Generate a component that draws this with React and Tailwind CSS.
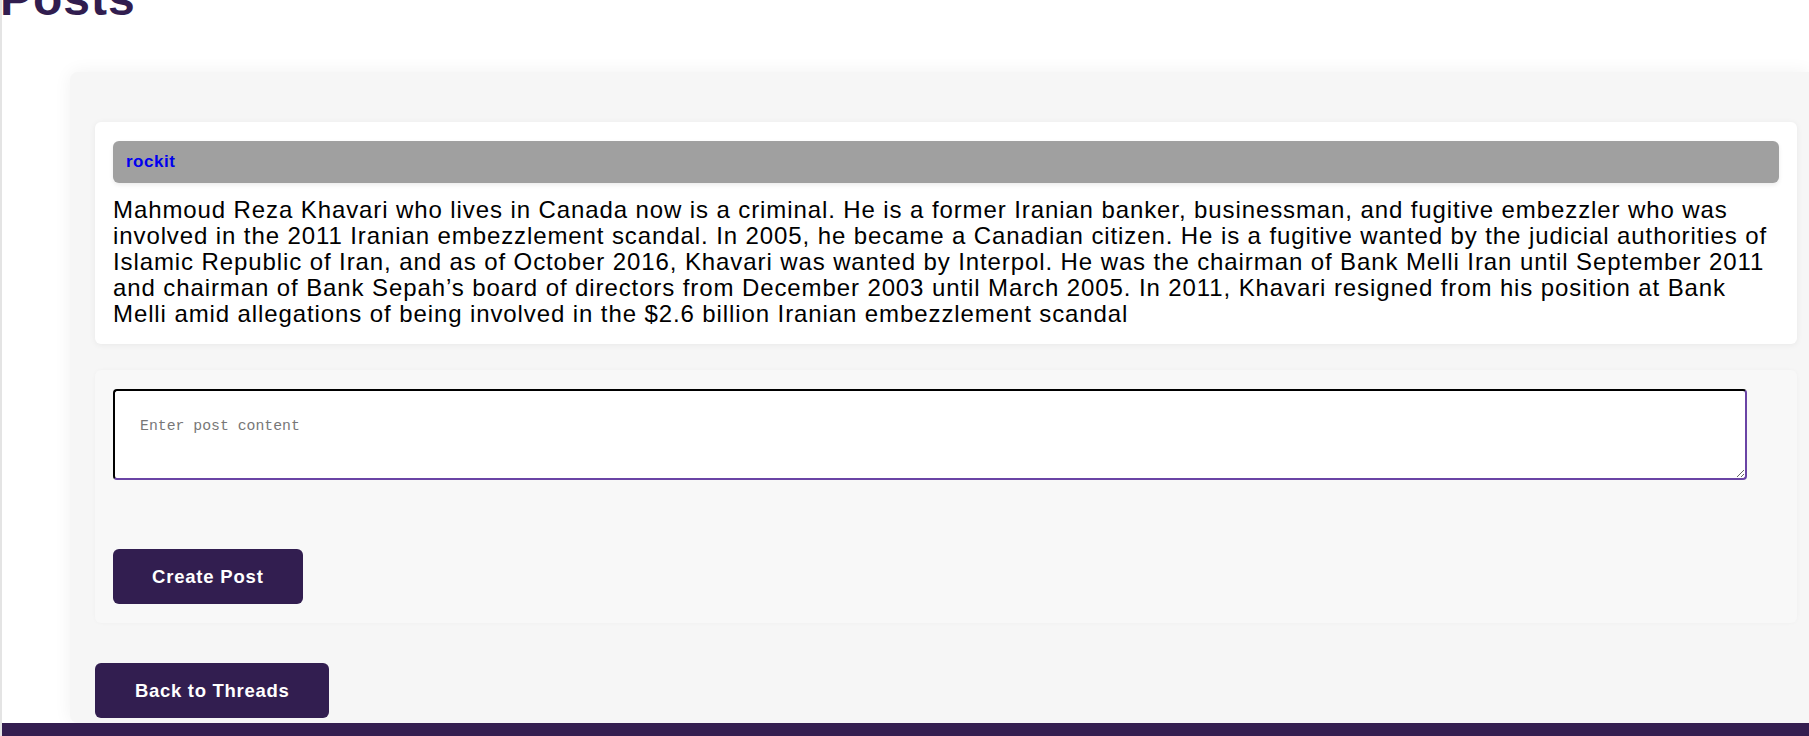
import React, { useState } from 'react';

const post = {
  author: 'rockit',
  content:
    'Mahmoud Reza Khavari who lives in Canada now is a criminal. He is a former Iranian banker, businessman, and fugitive embezzler who was involved in the 2011 Iranian embezzlement scandal. In 2005, he became a Canadian citizen. He is a fugitive wanted by the judicial authorities of Islamic Republic of Iran, and as of October 2016, Khavari was wanted by Interpol. He was the chairman of Bank Melli Iran until September 2011 and chairman of Bank Sepah\u2019s board of directors from December 2003 until March 2005. In 2011, Khavari resigned from his position at Bank Melli amid allegations of being involved in the $2.6 billion Iranian embezzlement scandal',
};

function PostCard({ post }) {
  return (
    <article className="rounded-md bg-white pt-[19px] pl-[18px] pr-[18px] pb-[17px] shadow-[0_1px_6px_rgba(0,0,0,0.06)]">
      <div className="flex h-[42px] items-center rounded-md bg-[#a0a0a0] pl-[13px] shadow-[0_2px_4px_rgba(0,0,0,0.08)]">
        <a href="#" className="text-[17px] font-bold tracking-[0.5px] text-[#0000ee]">
          {post.author}
        </a>
      </div>
      <p className="mt-[14px] text-[24px] leading-[26px] tracking-[0.9px] text-black">{post.content}</p>
    </article>
  );
}

function NewPostForm() {
  const [content, setContent] = useState('');

  return (
    <form
      onSubmit={(e) => e.preventDefault()}
      className="mt-[26px] rounded-md bg-[#f8f8f8] pt-[19px] pl-[18px] pb-[19px] shadow-[0_0_4px_rgba(0,0,0,0.03)]"
    >
      <textarea
        value={content}
        onChange={(e) => setContent(e.target.value)}
        placeholder="Enter post content"
        className="box-border block h-[91px] w-[1634px] rounded-[4px] border-2 border-t-black border-l-black border-r-[#6a44a5] border-b-[#6a44a5] bg-white pt-[27px] pl-[25px] font-['Liberation_Mono',monospace] text-[14.8px] leading-[17px] text-black outline-none placeholder:text-[#777]"
      />
      <button
        type="submit"
        className="mt-[69px] flex h-[55px] items-center rounded-md bg-[#321e50] px-[39px] text-[18.5px] font-bold tracking-[0.8px] text-white"
      >
        Create Post
      </button>
    </form>
  );
}

export default function App() {
  return (
    <div className="overflow-hidden border-l-2 border-[#e4e4e4] bg-white font-['Liberation_Sans',Arial,sans-serif]">
      <h1 className="-mt-[29px] -ml-[2px] text-[48px] font-bold leading-[55px] tracking-[1px] text-[#311d4f]">Posts</h1>

      <main className="mt-[46px] ml-[68px] rounded-l-lg bg-[#f6f6f6] pt-[50px] pl-[25px] pr-[12px] pb-[5px] shadow-[0_0_18px_rgba(0,0,0,0.06)]">
        <PostCard post={post} />
        <NewPostForm />
        <button
          type="button"
          className="mt-[40px] flex h-[55px] items-center rounded-md bg-[#321e50] px-[40px] text-[18.5px] font-bold tracking-[0.7px] text-white"
        >
          Back to Threads
        </button>
      </main>

      <footer className="h-[60px] bg-[#341e50]" />
    </div>
  );
}
